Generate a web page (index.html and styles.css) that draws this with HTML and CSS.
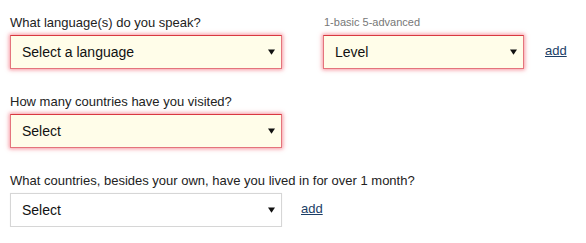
FILE: index.html
```html
<!DOCTYPE html>
<html>
<head>
<meta charset="utf-8">
<link rel="stylesheet" href="styles.css">
</head>
<body>
<form class="form">
  <div class="row">
    <div class="field">
      <div class="label">What language(s) do you speak?</div>
      <div class="select select-error select-wide">
        <span class="select-text">Select a language</span>
        <svg class="arrow" width="8" height="6" viewBox="0 0 8 6"><polygon points="0,0 8,0 4,6" fill="#111"/></svg>
      </div>
    </div>
    <div class="field field-level">
      <div class="label label-small">1-basic 5-advanced</div>
      <div class="control-line">
        <div class="select select-error select-narrow">
          <span class="select-text">Level</span>
          <svg class="arrow" width="8" height="6" viewBox="0 0 8 6"><polygon points="0,0 8,0 4,6" fill="#111"/></svg>
        </div>
        <a class="add add-level" href="#">add</a>
      </div>
    </div>
  </div>

  <div class="row">
    <div class="field">
      <div class="label">How many countries have you visited?</div>
      <div class="select select-error select-wide">
        <span class="select-text">Select</span>
        <svg class="arrow" width="8" height="6" viewBox="0 0 8 6"><polygon points="0,0 8,0 4,6" fill="#111"/></svg>
      </div>
    </div>
  </div>

  <div class="row">
    <div class="field">
      <div class="label">What countries, besides your own, have you lived in for over 1 month?</div>
      <div class="control-line">
        <div class="select select-plain select-wide">
          <span class="select-text">Select</span>
          <svg class="arrow" width="8" height="6" viewBox="0 0 8 6"><polygon points="0,0 8,0 4,6" fill="#111"/></svg>
        </div>
        <a class="add add-lived" href="#">add</a>
      </div>
    </div>
  </div>
</form>
</body>
</html>
```

FILE: styles.css
```css
html, body {
  margin: 0;
  padding: 0;
  background: #ffffff;
}

body {
  font-family: "Liberation Sans", Arial, sans-serif;
  color: #222;
}

.form {
  padding: 15px 0 0 10px;
  display: flex;
  flex-direction: column;
  gap: 25px;
}

.row {
  display: flex;
  align-items: flex-start;
}

.field {
  display: flex;
  flex-direction: column;
  gap: 5px;
}

.field-level {
  margin-left: 41px;
}

.control-line {
  display: flex;
  align-items: center;
}

.label {
  font-size: 13px;
  line-height: 15px;
  color: #222;
  white-space: nowrap;
}

.label-small {
  font-size: 11px;
  color: #777;
  padding-left: 1px;
}

.select {
  box-sizing: border-box;
  height: 34px;
  display: flex;
  align-items: center;
  justify-content: space-between;
  padding: 0 6px 0 11px;
  font-size: 14px;
  line-height: 32px;
  color: #111;
}

.select-wide {
  width: 272px;
}

.select-narrow {
  width: 201px;
}

.select-error {
  background: #fffde9;
  border: 1px solid #e4747c;
  border-top-color: #d83840;
  box-shadow: 0 0 4px 1px rgba(240, 80, 95, 0.6);
}

.select-plain {
  background: #ffffff;
  border: 1px solid #d6d6d6;
  box-shadow: 0 0 1px rgba(0, 0, 0, 0.08);
}

.arrow {
  display: block;
  width: 7px;
  height: 6px;
}

.add {
  font-size: 13px;
  line-height: 15px;
  color: #1b3d66;
  text-decoration: underline;
}

.add-level {
  margin-left: 21px;
  margin-top: -4px;
}

.add-lived {
  margin-left: 19px;
  margin-top: -3px;
}
```
